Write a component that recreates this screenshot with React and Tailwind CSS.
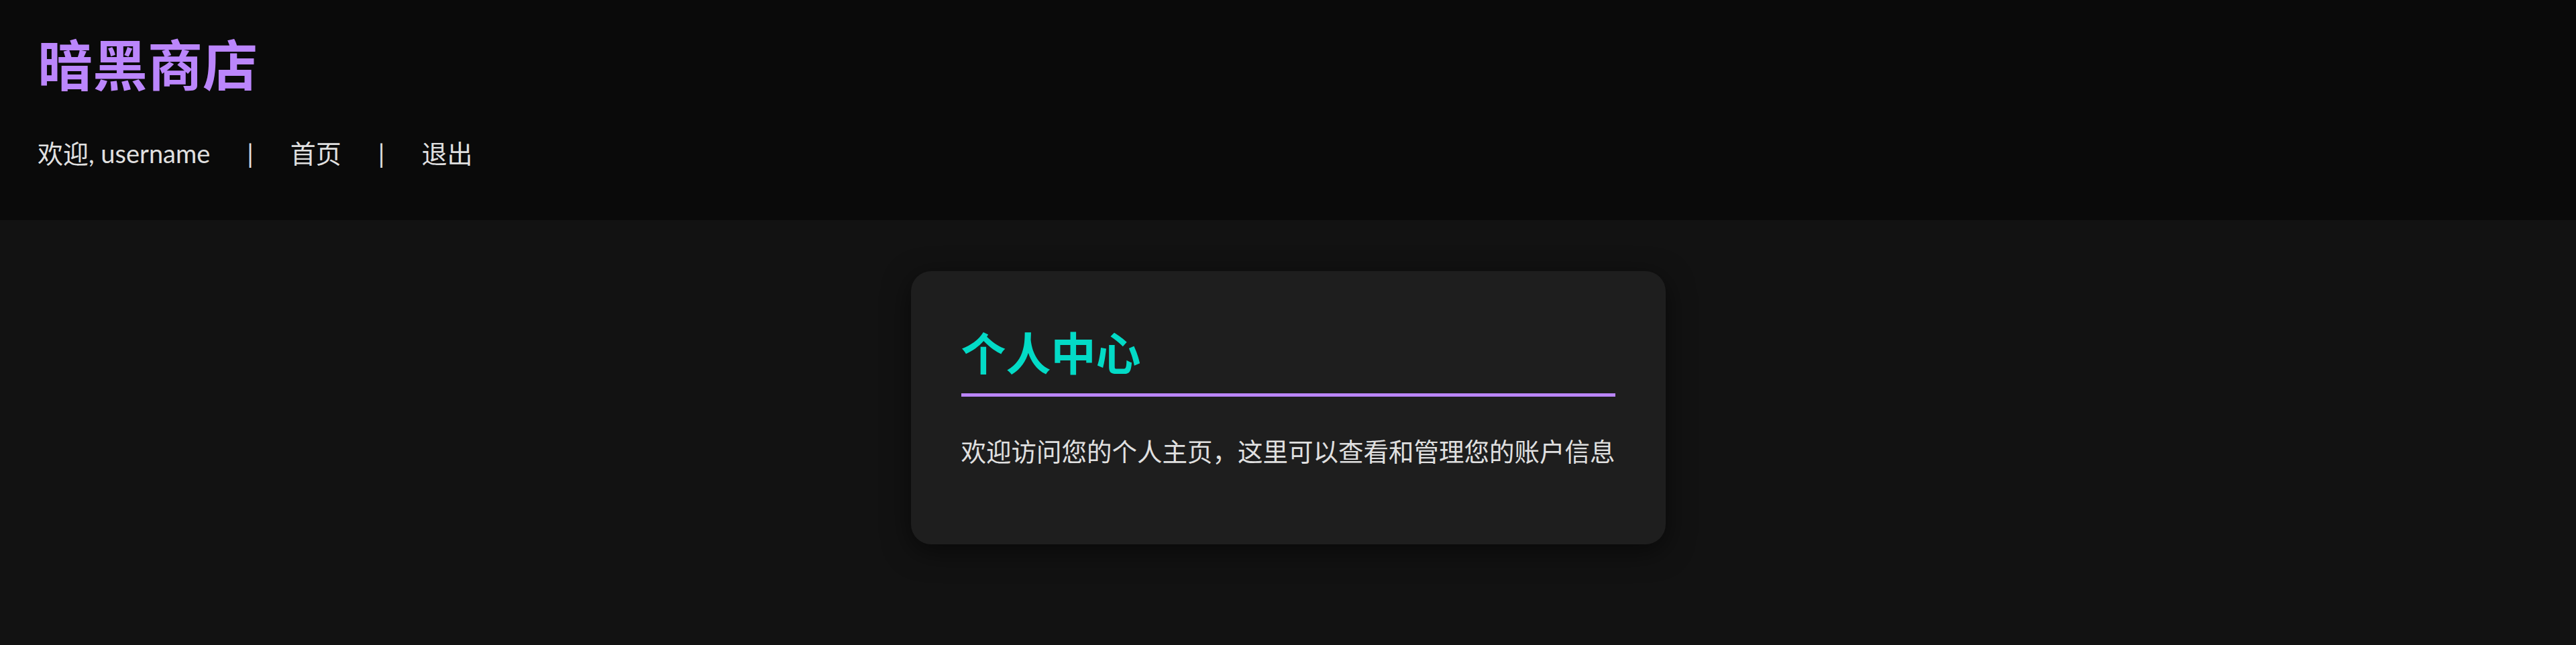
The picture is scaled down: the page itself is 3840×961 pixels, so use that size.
import React from 'react';

const navLinks = ['首页', '退出'];

const Header = ({ username }) => {
  return (
    <header className="bg-[#0a0a0a] px-[56px] pt-[52px] pb-[81px]">
      <h1 className="text-[82px] leading-none font-bold text-[#bb86fc]">暗黑商店</h1>
      <nav className="mt-[75px] flex items-center gap-[55px] text-[38px] leading-none text-[#e0e0e0] font-['Lato','Noto_Sans_CJK_SC',sans-serif]">
        <span>欢迎, {username}</span>
        {navLinks.map((link) => (
          <React.Fragment key={link}>
            <span className="text-[#e0e0e0]">|</span>
            <a href="#" className="hover:text-[#bb86fc]">
              {link}
            </a>
          </React.Fragment>
        ))}
      </nav>
    </header>
  );
};

const ProfileCard = () => {
  return (
    <div className="w-[1125px] rounded-[30px] bg-[#1e1e1e] px-[75px] pt-[85px] pb-[121px] shadow-[0_10px_40px_rgba(0,0,0,0.55)]">
      <h2 className="border-b-[5px] border-[#bb86fc] pb-[30px] text-[67px] leading-none font-bold text-[#03dac6]">
        个人中心
      </h2>
      <p className="mt-[61px] whitespace-nowrap text-[37.5px] leading-none text-[#e0e0e0]">
        欢迎访问您的个人主页，这里可以查看和管理您的账户信息
      </p>
    </div>
  );
};

export default function App() {
  return (
    <div className="min-h-screen bg-[#121212] font-['Noto_Sans_CJK_SC','Noto_Sans',sans-serif]">
      <Header username="username" />
      <main className="flex justify-center pt-[76px]">
        <ProfileCard />
      </main>
    </div>
  );
}
